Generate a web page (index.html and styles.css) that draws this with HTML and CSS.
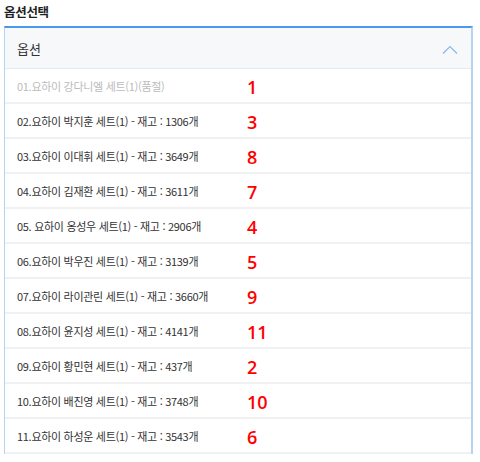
FILE: index.html
```html
<!DOCTYPE html>
<html lang="ko">
<head>
<meta charset="utf-8">
<link rel="stylesheet" href="styles.css">
</head>
<body>
<div class="page">
  <h2 class="title">옵션선택</h2>
  <div class="select">
    <div class="select-head">
      <span>옵션</span>
      <svg class="chev" width="16" height="9" viewBox="0 0 16 9"><path d="M1 8.5 L8 1.5 L15 8.5" fill="none" stroke="#8db6e6" stroke-width="1.2"/></svg>
    </div>
    <ul class="options">
      <li class="opt soldout"><span class="name">01.요하이 강다니엘 세트(1)(품절)</span><span class="num">1</span></li>
      <li class="opt"><span class="name">02.요하이 박지훈 세트(1) - 재고 : 1306개</span><span class="num">3</span></li>
      <li class="opt"><span class="name">03.요하이 이대휘 세트(1) - 재고 : 3649개</span><span class="num">8</span></li>
      <li class="opt"><span class="name">04.요하이 김재환 세트(1) - 재고 : 3611개</span><span class="num">7</span></li>
      <li class="opt"><span class="name">05. 요하이 옹성우 세트(1) - 재고 : 2906개</span><span class="num">4</span></li>
      <li class="opt"><span class="name">06.요하이 박우진 세트(1) - 재고 : 3139개</span><span class="num">5</span></li>
      <li class="opt"><span class="name">07.요하이 라이관린 세트(1) - 재고 : 3660개</span><span class="num">9</span></li>
      <li class="opt"><span class="name">08.요하이 윤지성 세트(1) - 재고 : 4141개</span><span class="num">11</span></li>
      <li class="opt"><span class="name">09.요하이 황민현 세트(1) - 재고 : 437개</span><span class="num">2</span></li>
      <li class="opt"><span class="name">10.요하이 배진영 세트(1) - 재고 : 3748개</span><span class="num">10</span></li>
      <li class="opt"><span class="name">11.요하이 하성운 세트(1) - 재고 : 3543개</span><span class="num">6</span></li>
    </ul>
  </div>
</div>
</body>
</html>
```
FILE: styles.css
```css
html, body {
  margin: 0;
  padding: 0;
  background: #fff;
}
body {
  font-family: "Noto Sans CJK KR", "Noto Sans", sans-serif;
  color: #333;
}
.page {
  padding: 3px 7px 0 4px;
}
.title {
  margin: 0 0 5px 0;
  font-size: 12.5px;
  line-height: 18px;
  font-weight: 700;
  color: #222;
  letter-spacing: -0.3px;
}
.select {
  border-top: 2px solid #4a98ee;
  border-left: 1px solid #b5d4f4;
  border-right: 2px solid #b5d4f4;
  background: #fff;
}
.select-head {
  height: 40px;
  background: #f6f8fa;
  border-bottom: 1px solid #e3eaf2;
  display: flex;
  align-items: center;
  justify-content: space-between;
  padding: 0 13px 0 12px;
  font-size: 13px;
  color: #333;
}
.chev {
  margin-top: 2px;
}
.options {
  list-style: none;
  margin: 0;
  padding: 0;
}
.opt {
  height: 33px;
  border-bottom: 2px solid #f1f1f1;
  display: flex;
  align-items: center;
  padding-left: 12px;
  font-size: 11px;
  letter-spacing: -0.3px;
}
.opt .name {
  width: 230px;
  color: #333;
}
.opt.soldout .name {
  color: #bbb;
}
.num {
  font-family: "Open Sans", sans-serif;
  font-size: 18px;
  font-weight: 600;
  color: #f00;
  letter-spacing: 0;
  margin-top: 2px;
}
```
